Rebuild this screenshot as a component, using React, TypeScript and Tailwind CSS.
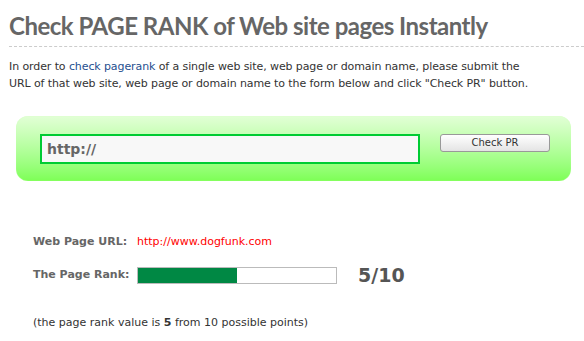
export default function App() {
  return (
    <div className="w-[584px] h-[341px] overflow-hidden bg-white font-['DejaVu_Sans',sans-serif]">
      <div className="pl-[9px] pt-[12px]">
        <h1 className="font-['Lato',sans-serif] text-[24px] leading-[28px] font-bold text-[#666666] tracking-[-0.5px] whitespace-nowrap">
          Check PAGE RANK of Web site pages Instantly
        </h1>
        <div className="mt-[6px] border-t border-dashed border-[#cccccc]" />
        <p className="mt-[11px] text-[11px] leading-[17px] text-[#333333] tracking-[-0.1px] whitespace-nowrap">
          In order to <span className="text-[#1f4f8f]">check pagerank</span> of a single web site, web page or domain name, please submit the
          <br />
          URL of that web site, web page or domain name to the form below and click "Check PR" button.
        </p>
      </div>

      <div className="ml-[16px] mt-[24px] w-[555px] h-[65px] rounded-[12px] bg-gradient-to-b from-[#e2ffd6] to-[#7dff55] shadow-[inset_0_0_1px_#c8ffb0] flex items-start pl-[24px] pt-[18px]">
        <div className="w-[380px] h-[30px] border-[2px] border-[#00cc33] bg-[#f8f8f8] flex items-center pl-[5px]">
          <span className="text-[14px] font-bold text-[#666666]">http://</span>
        </div>
        <button className="ml-[20px] w-[110px] h-[18px] rounded-[3px] border border-[#999999] bg-gradient-to-b from-[#ffffff] to-[#e4e4e4] text-[10px] text-[#333333] leading-none">
          Check PR
        </button>
      </div>

      <div className="pl-[33px] mt-[52px] text-[11px]">
        <div className="flex items-center h-[18px]">
          <span className="w-[104px] font-bold text-[#666666]">Web Page URL:</span>
          <span className="text-[#ff0000]">http://www.dogfunk.com</span>
        </div>
        <div className="flex items-center mt-[15px] h-[18px]">
          <span className="w-[104px] font-bold text-[#666666]">The Page Rank:</span>
          <div className="w-[200px] h-[17px] border border-[#bbbbbb] bg-white">
            <div className="h-full bg-[#008844]" style={{ width: '50%' }} />
          </div>
          <span className="ml-[21px] text-[19px] font-bold text-[#555555] leading-none">5/10</span>
        </div>
        <p className="mt-[31px] text-[#333333]">
          (the page rank value is <b>5</b> from 10 possible points)
        </p>
      </div>
    </div>
  );
}
